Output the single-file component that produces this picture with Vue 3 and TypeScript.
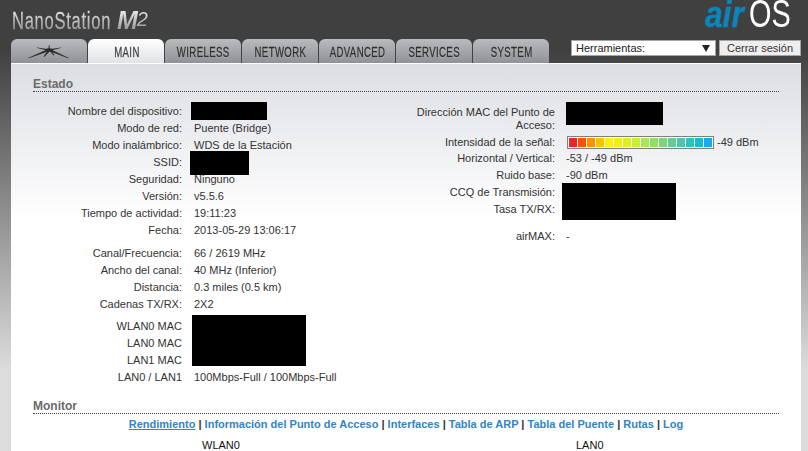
<template>
  <div class="page">
    <header class="top">
      <div class="product">
        <span class="nano"><span class="nano-text">NanoStation</span></span>
        <span class="m2">M<span class="two">2</span></span>
      </div>
      <div class="airos">
        <span class="air"><span class="air-text">air</span></span>
        <span class="os"><span class="os-text">OS</span></span>
      </div>
    </header>

    <nav class="nav">
      <a class="tab logo-tab">
        <svg width="42" height="15" viewBox="0 0 42 15">
          <g fill="#2a2a2a">
            <polygon points="19,5.5 0,14 1,14.3 21,7" />
            <polygon points="19,5 9,3.4 8.5,3.8 19,6.6" />
            <polygon points="20.4,5 20.8,1 21.4,1 21.8,5" />
            <polygon points="23,5 33,3.4 33.5,3.8 23,6.6" />
            <polygon points="23,5.5 41,14 40,14.3 21,7" />
            <polygon points="20,6 15.5,12.5 16.3,13 22,7" />
            <polygon points="21,6 25.5,11.5 26.3,11 23,6" />
            <ellipse cx="21" cy="5.8" rx="4" ry="1.6" />
          </g>
        </svg>
      </a>
      <a v-for="t in tabs" :key="t" class="tab" :class="{ active: t === 'MAIN' }">
        <span class="tab-text">{{ t }}</span>
      </a>
      <div class="tools">
        <div class="select-wrap">
          <select class="tool-select"><option>Herramientas:</option></select>
        </div>
        <button class="logout">Cerrar sesión</button>
      </div>
    </nav>

    <main class="panel">
      <h2 class="section">Estado</h2>
      <div class="info">
        <div class="col-left">
          <dl class="grid">
            <template v-for="r in leftA" :key="r[0]">
              <dt>{{ r[0] }}</dt>
              <dd><i v-if="r[2]" class="black" :class="r[2]"></i>{{ r[1] }}</dd>
            </template>
          </dl>
          <dl class="grid block-b">
            <template v-for="r in leftB" :key="r[0]">
              <dt>{{ r[0] }}</dt>
              <dd>{{ r[1] }}</dd>
            </template>
          </dl>
          <dl class="grid block-c">
            <template v-for="r in leftC" :key="r[0]">
              <dt>{{ r[0] }}</dt>
              <dd><i v-if="r[2]" class="black" :class="r[2]"></i>{{ r[1] }}</dd>
            </template>
          </dl>
        </div>

        <div class="col-right">
          <dl class="grid right">
            <dt class="two-line">Dirección MAC del Punto de Acceso:</dt>
            <dd><i class="black ap"></i></dd>
            <dt class="signal-row">Intensidad de la señal:</dt>
            <dd class="signal-row signal">
              <span class="bar">
                <span v-for="c in bars" :key="c" class="seg" :style="{ background: c }"></span>
              </span>
              <span>-49 dBm</span>
            </dd>
            <dt>Horizontal / Vertical:</dt>
            <dd>-53 / -49 dBm</dd>
            <dt>Ruido base:</dt>
            <dd>-90 dBm</dd>
            <dt>CCQ de Transmisión:</dt>
            <dd><i class="black ccq"></i></dd>
            <dt>Tasa TX/RX:</dt>
            <dd></dd>
            <dt class="air-max">airMAX:</dt>
            <dd class="air-max">-</dd>
          </dl>
        </div>
      </div>

      <h2 class="section monitor">Monitor</h2>
      <div class="links">
        <template v-for="(l, i) in links" :key="l">
          <span v-if="i > 0" class="sep"> | </span>
          <a class="link" :class="{ current: i === 0 }">{{ l }}</a>
        </template>
      </div>
      <div class="ifaces">
        <span class="wlan">WLAN0</span>
        <span class="lan">LAN0</span>
      </div>
    </main>
  </div>
</template>

<script setup lang="ts">
const tabs = ['MAIN', 'WIRELESS', 'NETWORK', 'ADVANCED', 'SERVICES', 'SYSTEM'];

const leftA: string[][] = [
  ['Nombre del dispositivo:', '', 'name'],
  ['Modo de red:', 'Puente (Bridge)'],
  ['Modo inalámbrico:', 'WDS de la Estación'],
  ['SSID:', '', 'ssid'],
  ['Seguridad:', 'Ninguno'],
  ['Versión:', 'v5.5.6'],
  ['Tiempo de actividad:', '19:11:23'],
  ['Fecha:', '2013-05-29 13:06:17']
];

const leftB: string[][] = [
  ['Canal/Frecuencia:', '66 / 2619 MHz'],
  ['Ancho del canal:', '40 MHz (Inferior)'],
  ['Distancia:', '0.3 miles (0.5 km)'],
  ['Cadenas TX/RX:', '2X2']
];

const leftC: string[][] = [
  ['WLAN0 MAC', '', 'macs'],
  ['LAN0 MAC', ''],
  ['LAN1 MAC', ''],
  ['LAN0 / LAN1', '100Mbps-Full / 100Mbps-Full']
];

const bars = [
  '#f5202a', '#ff4d10', '#ff9000', '#ffc000', '#fff000', '#f0f010', '#dcf020', '#c4f03a',
  '#a8e850', '#90e060', '#78d878', '#60d090', '#48c8a8', '#30c0c0', '#18b8d8', '#08b0f0'
];

const links = [
  'Rendimiento',
  'Información del Punto de Acceso',
  'Interfaces',
  'Tabla de ARP',
  'Tabla del Puente',
  'Rutas',
  'Log'
];
</script>

<style>
html,
body {
  margin: 0;
  height: 451px;
  overflow: hidden;
}
</style>

<style scoped>
.page {
  width: 808px;
  height: 451px;
  overflow: hidden;
  display: flex;
  flex-direction: column;
  font-family: 'Liberation Sans', Arial, sans-serif;
  font-size: 11px;
  color: #333;
  background: linear-gradient(#404040 50px, #dcdcdc 370px);
}

.top {
  height: 39px;
  flex: none;
  display: flex;
  justify-content: space-between;
  padding: 0 17px 0 12px;
}

.product {
  display: flex;
  align-items: baseline;
  height: 32px;
  padding-top: 6px;
  box-sizing: border-box;
}

/* no narrow face installed, so the condensed logo type is squeezed */
.nano {
  width: 98px;
  font-size: 23px;
  line-height: 26px;
  white-space: nowrap;
}

.nano-text {
  display: inline-block;
  transform: scaleX(0.72);
  transform-origin: left center;
  letter-spacing: 1px;
  -webkit-text-stroke: 0.3px transparent;
  background: linear-gradient(#f2f2f2, #8a8a8a);
  -webkit-background-clip: text;
  background-clip: text;
  color: transparent;
}

.m2 {
  font-size: 25px;
  line-height: 26px;
  font-weight: bold;
  font-style: italic;
  margin-left: 7px;
  letter-spacing: -1px;
  background: linear-gradient(#ffffff, #8a8a8a);
  -webkit-background-clip: text;
  background-clip: text;
  color: transparent;
}

.two {
  font-weight: normal;
  font-size: 20px;
  vertical-align: 3px;
  letter-spacing: 0;
}

.airos {
  display: flex;
  align-items: baseline;
  height: 28px;
  line-height: 28px;
}

.air {
  width: 39px;
  font-size: 36px;
  font-weight: bold;
  font-style: italic;
  white-space: nowrap;
}

.air-text {
  display: inline-block;
  color: #0a86bd;
  -webkit-text-stroke: 0.4px #0a86bd;
  transform: scaleX(0.88);
  transform-origin: left center;
}

.os {
  width: 42px;
  margin-left: 5px;
  font-size: 39px;
  white-space: nowrap;
}

.os-text {
  display: inline-block;
  color: #fff;
  transform: scaleX(0.74);
  transform-origin: left center;
}

.nav {
  height: 25px;
  flex: none;
  display: flex;
  gap: 1px;
  padding: 0 7px 0 11px;
}

.tab {
  width: 76px;
  height: 25px;
  display: flex;
  align-items: center;
  justify-content: center;
  border-radius: 6px 6px 0 0;
  background: linear-gradient(#b9bbbe, #8d9095);
  font-size: 15px;
  letter-spacing: 0.6px;
  color: #2e2e2e;
  text-shadow: 0 1px 0 rgba(255, 255, 255, 0.35);
}

.tab-text {
  display: inline-block;
  transform: scaleX(0.64);
  -webkit-text-stroke: 0.3px #2e2e2e;
  margin-left: 1px;
}

.tab.active {
  background: linear-gradient(#ffffff, #dfe1e5);
  color: #444;
}

.tab.active .tab-text {
  -webkit-text-stroke-color: #444;
}

.tools {
  margin-left: auto;
  display: flex;
  gap: 3px;
  padding-top: 1px;
}

.select-wrap {
  position: relative;
}

.select-wrap::after {
  content: '';
  position: absolute;
  right: 6px;
  top: 5px;
  border-left: 4px solid transparent;
  border-right: 4px solid transparent;
  border-top: 7px solid #222;
}

.tool-select {
  appearance: none;
  width: 145px;
  height: 16px;
  box-sizing: border-box;
  padding: 0 0 0 4px;
  margin: 0;
  border: 1px solid #a5a5a5;
  border-radius: 0;
  background: #fff;
  font: 11px 'Liberation Sans', Arial, sans-serif;
  color: #222;
}

.logout {
  width: 82px;
  height: 16px;
  box-sizing: border-box;
  padding: 0;
  border: 1px solid #a5a5a5;
  border-radius: 0;
  background: #eee;
  font: 11px 'Liberation Sans', Arial, sans-serif;
  color: #333;
}

.panel {
  flex: 1;
  margin: -1px 7px 0 11px;
  padding: 13px 22px 0;
  border-top: 1px solid #fff;
  background: linear-gradient(#dcdee3, #ffffff 155px);
}

.section {
  margin: 0;
  height: 14px;
  line-height: 14px;
  font-size: 12px;
  font-weight: bold;
  color: #6a6a6a;
  border-bottom: 1px dotted #444;
}

.info {
  display: flex;
  padding-top: 11px;
  height: 284px;
}

.col-left {
  width: 362px;
  flex: none;
}

.grid {
  margin: 0;
  display: grid;
  grid-template-columns: 149px 1fr;
  grid-auto-rows: 17px;
  column-gap: 12px;
  line-height: 17px;
}

.grid dt {
  text-align: right;
  white-space: nowrap;
}

.grid dd {
  margin: 0;
  position: relative;
  white-space: nowrap;
}

.block-b {
  margin-top: 6px;
}

.block-c {
  margin-top: 5px;
}

.grid.right {
  grid-template-columns: 160px 1fr;
  grid-template-rows: 31px 16px;
  column-gap: 11px;
}

.grid.right .two-line {
  white-space: normal;
  line-height: 12.5px;
  padding-top: 3px;
}

.signal {
  display: flex;
  align-items: center;
  gap: 3px;
}

.bar {
  width: 147px;
  height: 13px;
  box-sizing: border-box;
  border: 1px solid #808080;
  background: #fff;
  padding: 1px;
  display: flex;
  gap: 1px;
  margin-left: 1px;
}

.seg {
  flex: 1;
}

.air-max {
  margin-top: 10px !important;
}

.black {
  position: absolute;
  background: #000;
}

.black.name {
  left: -3px;
  top: -1px;
  width: 76px;
  height: 18px;
}

.black.ssid {
  left: -4px;
  top: -3px;
  width: 59px;
  height: 24px;
}

.black.macs {
  left: -2px;
  top: -3px;
  width: 114px;
  height: 51px;
}

.black.ap {
  left: 0;
  top: -1px;
  width: 97px;
  height: 23px;
}

.black.ccq {
  left: -4px;
  top: -1px;
  width: 114px;
  height: 37px;
}

.monitor {
  margin-top: 12px;
}

.links {
  text-align: center;
  height: 17px;
  line-height: 17px;
  margin-top: 2px;
  font-size: 11px;
  font-weight: bold;
  white-space: pre;
}

.link {
  color: #2f85c6;
}

.link.current {
  text-decoration: underline;
}

.sep {
  color: #333;
}

.ifaces {
  position: relative;
  margin-top: 5px;
  line-height: 14px;
  color: #111;
}

.wlan {
  position: absolute;
  left: 169px;
}

.lan {
  position: absolute;
  left: 543px;
}
</style>
